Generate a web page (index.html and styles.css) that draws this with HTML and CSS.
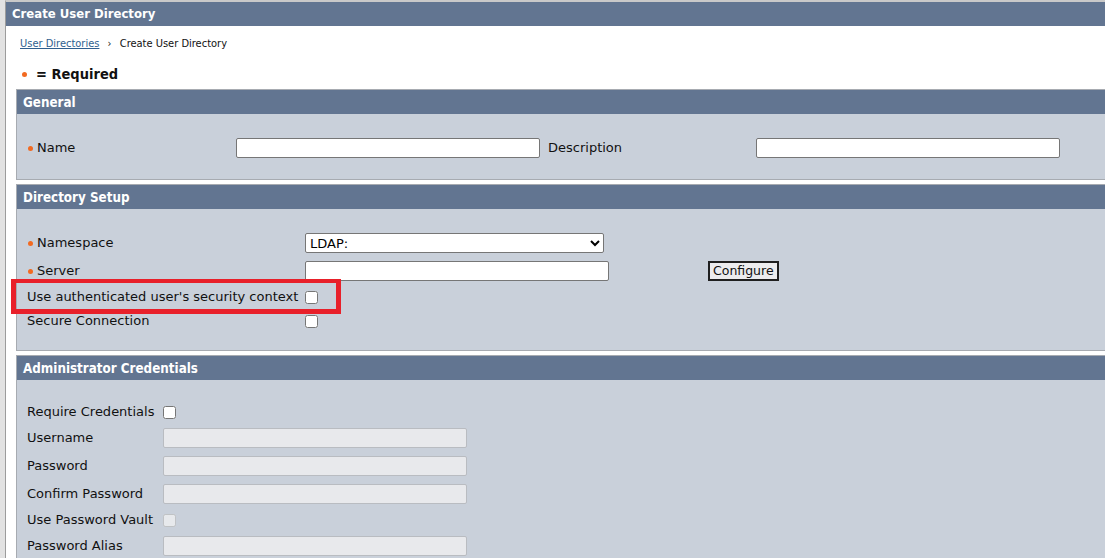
FILE: index.html
```html
<!DOCTYPE html>
<html lang="en">
<head>
    <meta charset="UTF-8">
    <title>Create User Directory</title>
    <link rel="stylesheet" href="styles.css">
</head>
<body>

<div class="page">
    <div class="title-bar">Create User Directory</div>

    <div class="content">
        <div class="crumbs">
            <a href="#">User Directories</a>
            <span class="sep">&rsaquo;</span>
            <span>Create User Directory</span>
        </div>

        <div class="required"><span class="dot"></span>= Required</div>

        <!-- General -->
        <div class="panel">
            <div class="panel-head">General</div>
            <div class="panel-body grid-general">
                <div class="cell label tall"><span class="dot"></span>Name</div>
                <div class="cell tall"><input type="text" class="field"></div>
                <div class="cell label tall">Description</div>
                <div class="cell tall"><input type="text" class="field"></div>
            </div>
        </div>

        <!-- Directory Setup -->
        <div class="panel">
            <div class="panel-head">Directory Setup</div>
            <div class="panel-body grid-setup">
                <div class="cell label tall"><span class="dot"></span>Namespace</div>
                <div class="cell tall">
                    <select class="select">
                        <option>LDAP:</option>
                    </select>
                </div>
                <div class="cell tall"></div>

                <div class="cell label tall"><span class="dot"></span>Server</div>
                <div class="cell tall"><input type="text" class="field"></div>
                <div class="cell tall"><button class="btn">Configure</button></div>

                <div class="cell label">Use authenticated user's security context</div>
                <div class="cell"><input type="checkbox" class="check"></div>
                <div class="cell"></div>

                <div class="cell label">Secure Connection</div>
                <div class="cell"><input type="checkbox" class="check"></div>
                <div class="cell"></div>
            </div>
        </div>

        <!-- Administrator Credentials -->
        <div class="panel">
            <div class="panel-head">Administrator Credentials</div>
            <div class="panel-body grid-admin">
                <div class="cell label">Require Credentials</div>
                <div class="cell"><input type="checkbox" class="check"></div>

                <div class="cell label tall">Username</div>
                <div class="cell tall"><input type="text" class="field" disabled></div>

                <div class="cell label tall">Password</div>
                <div class="cell tall"><input type="password" class="field" disabled></div>

                <div class="cell label tall">Confirm Password</div>
                <div class="cell tall"><input type="password" class="field" disabled></div>

                <div class="cell label">Use Password Vault</div>
                <div class="cell"><input type="checkbox" class="check" disabled></div>

                <div class="cell label tall">Password Alias</div>
                <div class="cell tall"><input type="text" class="field" disabled></div>
            </div>
        </div>
    </div>

    <div class="highlight"></div>
</div>

</body>
</html>
```

FILE: styles.css
```css
html, body {
    margin: 0;
    overflow: hidden;
}
body {
    font-family: "DejaVu Sans", Tahoma, sans-serif;
    font-size: 13px;
    color: #111;
    background: #fff;
    border-left: 5px solid #e2e2e2;
    height: 558px;
}
.page {
    position: relative;
    border-top: 2px solid #c9c9c9;
    border-left: 1px solid #9c9c9c;
    height: 100%;
}
.title-bar {
    height: 24px;
    line-height: 24px;
    background-color: #627591;
    color: #fff;
    font-family: "DejaVu Sans Condensed", "DejaVu Sans", sans-serif;
    font-weight: bold;
    font-size: 13px;
    padding-left: 6px;
}
.content {
    padding: 0 0 0 10px;
}
.crumbs {
    margin-top: 11px;
    padding-left: 4px;
    line-height: 14px;
    font-family: "DejaVu Sans Condensed", "DejaVu Sans", sans-serif;
    font-size: 11px;
}
.crumbs a {
    color: #2f5f8f;
}
.crumbs .sep {
    margin: 0 5px;
}
.required {
    margin-top: 15px;
    margin-bottom: 7px;
    padding-left: 6px;
    line-height: 16px;
    font-family: "DejaVu Sans Condensed", "DejaVu Sans", sans-serif;
    font-size: 14.5px;
    font-weight: bold;
    display: flex;
    align-items: center;
}
.required .dot {
    margin-right: 9px;
}
.dot {
    display: inline-block;
    width: 5px;
    height: 5px;
    border-radius: 50%;
    background-color: #f26a21;
    margin-right: 4px;
    vertical-align: middle;
}
.panel {
    width: 1100px;
    border: 1px solid #a7abb1;
    margin-bottom: 4px;
    background-color: #c9d0da;
}
.panel-head {
    height: 24px;
    line-height: 26px;
    background-color: #627591;
    color: #fff;
    font-family: "DejaVu Sans Condensed", "DejaVu Sans", sans-serif;
    font-weight: bold;
    font-size: 13.3px;
    padding-left: 6px;
}
.panel-body {
    display: grid;
    padding: 20px 0 17px 10px;
}
.grid-general { grid-template-columns: 209px 312px 208px 1fr; }
.grid-setup { grid-template-columns: 278px 403px 1fr; padding-top: 20px; padding-bottom: 17px; }
.grid-admin { grid-template-columns: 136px 1fr; padding-top: 20px; }

.cell {
    height: 24px;
    display: flex;
    align-items: center;
    line-height: 16px;
    white-space: nowrap;
}
.cell.tall { height: 28px; }
.label .dot { margin-left: 1px; margin-right: 4px; }

.field {
    box-sizing: border-box;
    width: 304px;
    height: 20px;
    margin: 0;
    border: 1px solid #767676;
    border-radius: 2px;
    background: #fff;
    font: inherit;
}
.field:disabled {
    background-color: #e8e9ec;
    border-color: #b9bcc1;
}
.select {
    box-sizing: border-box;
    width: 299px;
    height: 20px;
    margin: 0;
    border: 1px solid #767676;
    border-radius: 2px;
    background: #fff;
    font: inherit;
}
.check {
    width: 13px;
    height: 13px;
    margin: 0;
}
.btn {
    box-sizing: border-box;
    height: 20px;
    padding: 0 3px;
    margin: 0;
    border: 2px solid #1f1f1f;
    border-radius: 0;
    background-color: #ececee;
    font: inherit;
    font-size: 12.5px;
    color: #111;
}
.highlight {
    position: absolute;
    left: 5px;
    top: 277px;
    width: 320px;
    height: 26px;
    border: 5px solid #e8202a;
    border-top-width: 4px;
    pointer-events: none;
}
```
